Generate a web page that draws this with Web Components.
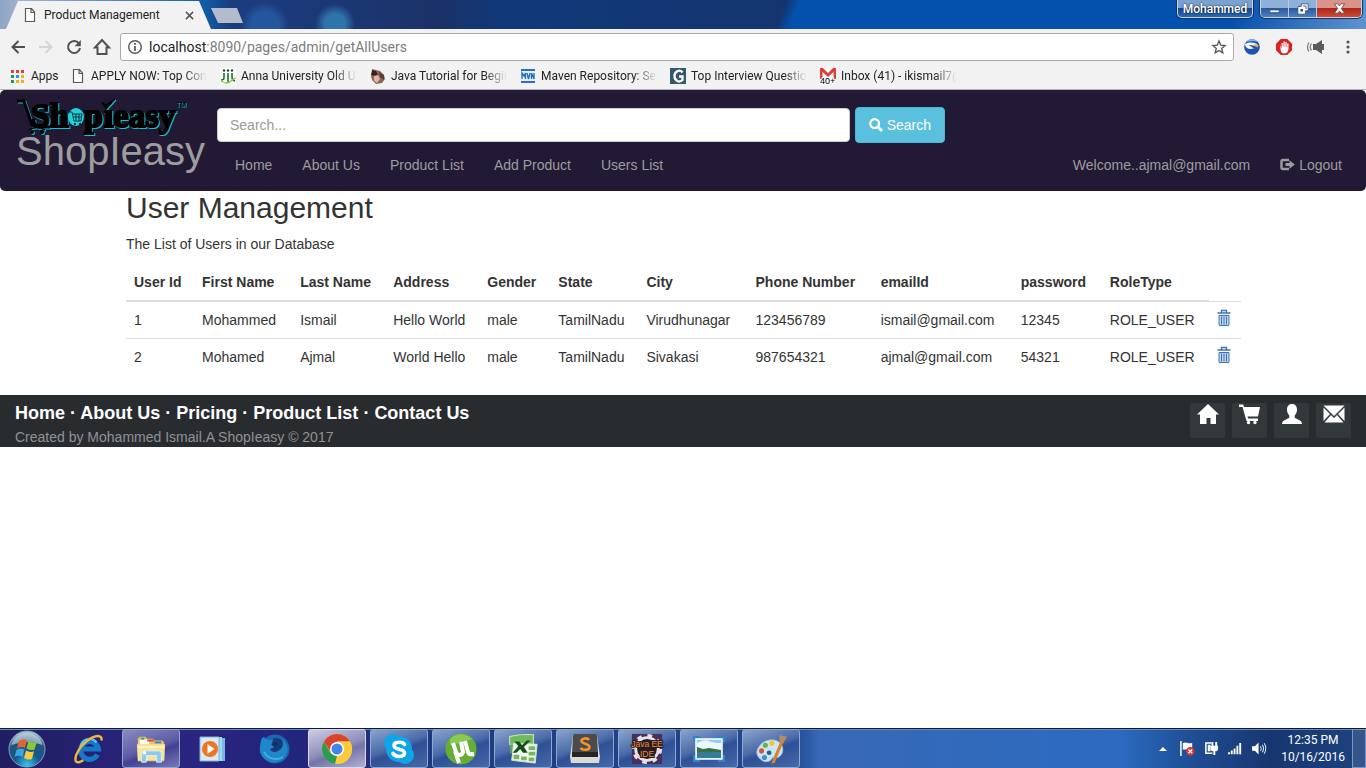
<!DOCTYPE html>
<html lang="en">
<head>
<meta charset="utf-8">
<title>Product Management</title>
<style>
  html, body { margin: 0; height: 100%; }
  body { font: 14px/20px "Liberation Sans", Arial, sans-serif; color: #333; background: #fff; }
</style>
</head>
<body>
<desktop-screen>
  <browser-chrome slot="browser">
    <book-mark icon="page">APPLY NOW: Top Con</book-mark>
    <book-mark icon="anna">Anna University Old U</book-mark>
    <book-mark icon="squirrel">Java Tutorial for Begin</book-mark>
    <book-mark icon="mvn">Maven Repository: Sea</book-mark>
    <book-mark icon="gee">Top Interview Questio</book-mark>
    <book-mark icon="gmail">Inbox (41) - ikismail7@</book-mark>
  </browser-chrome>
  <shop-navbar user="ajmal@gmail.com"></shop-navbar>
  <user-list heading="User Management">The List of Users in our Database</user-list>
  <shop-footer>Created by Mohammed Ismail.A ShopIeasy © 2017</shop-footer>
  <task-bar slot="taskbar"></task-bar>
</desktop-screen>

<script>
const ICONS = {
  page: ['0 0 16 16', '<path d="M3.500 1.500h6l3 3.500v9.500h-9zM9 1.500v4h3.500" fill="#fff" stroke="#5a5a5a" stroke-width="1.200"/>'],
  close: ['0 0 10 10', '<path d="M1 1l8 8M9 1l-8 8" stroke="#555" stroke-width="1.700"/>'],
  back: ['0 0 16 16', '<path d="M15 8H2.500M8.500 2L2.500 8l6 6" fill="none" stroke="#505050" stroke-width="2"/>'],
  forward: ['0 0 16 16', '<path d="M1 8h12.500M7.500 2l6 6-6 6" fill="none" stroke="#d4d4d4" stroke-width="2"/>'],
  reload: ['0 0 16 16', '<path d="M13 4.500A6 6 0 1 0 14 9" fill="none" stroke="#505050" stroke-width="2"/><path d="M14.800 1v6.200H8.600z" fill="#505050"/>'],
  home: ['0 0 18 18', '<path d="M9 2L2 9.500h2.500V16h9V9.500H16z" fill="none" stroke="#505050" stroke-width="2"/>'],
  info: ['0 0 16 16', '<circle cx="8" cy="8" r="6.300" fill="none" stroke="#555" stroke-width="1.400"/><path d="M8 7v5M8 4v1.700" stroke="#555" stroke-width="1.700"/>'],
  star: ['0 0 16 16', '<path d="M8 2l1.700 4.100 4.400.4-3.400 2.900 1.100 4.400L8 11.500l-3.800 2.300 1.100-4.400L1.900 6.500l4.400-.4z" fill="none" stroke="#555" stroke-width="1.300"/>'],
  eagle: ['0 0 16 16', '<circle cx="8" cy="8" r="7.800" fill="#1d55b0"/><path d="M2 3a8 8 0 0 1 12 0L9 2z" fill="#7ab8ef"/><path d="M1 5c5-2 9-2 13 1l-1 1.500-4-1-2 1 3 2-4 .5C3 9.500 1 8 1 5z" fill="#f3f6fa"/><path d="M10 5l5 1.500-1.500 2-3-1.500z" fill="#e9a640"/><path d="M5 6l4 .5-2 1z" fill="#222"/>'],
  stop: ['0 0 16 16', '<path d="M4.800 0h6.400L16 4.800v6.400L11.200 16H4.800L0 11.200V4.800z" fill="#da2220"/><path d="M4.500 6v4c0 3 1.500 4.500 3.800 4.500S12 13 12.500 10V4.500h-1.300V8h-.6V3H9.300v4.500h-.6v-5H7.400v5h-.6V4H5.600v6z" fill="#fff"/>'],
  speaker: ['0 0 18 16', '<path d="M6 5h3l6-4v14l-6-4H6zM15 5h2v6h-2z" fill="#5c5c5c"/><path d="M4.500 4.500c-1.500 2-1.500 5 0 7M2 3.500c-2 2.500-2 6.500 0 9" fill="none" stroke="#777" stroke-width="1.200"/>'],
  dots: ['0 0 16 16', '<g fill="#555"><circle cx="8" cy="3" r="1.600"/><circle cx="8" cy="8" r="1.600"/><circle cx="8" cy="13" r="1.600"/></g>'],
  apps: ['0 0 13 13', '<path d="M0 0h3v3H0zM5 0h3v3H5zM10 0h3v3h-3z" fill="#dc4437"/><path d="M0 5h3v3H0zM0 10h3v3H0z" fill="#0f9d58"/><path d="M5 5h3v3H5z" fill="#4285f4"/><path d="M10 5h3v3h-3zM5 10h3v3H5zM10 10h3v3h-3z" fill="#f0b020"/>'],
  anna: ['0 0 16 16', '<path d="M0 0h16v16H0z" fill="#fff"/><g fill="none" stroke="#13752c" stroke-width="1.600"><path d="M4 5v5q0 2-3 2M8 5v9M12 5v4q0 3 3 4"/></g><g fill="#174c2a"><circle cx="4" cy="2.500" r="1.200"/><circle cx="8" cy="2.500" r="1.200"/><circle cx="12" cy="2.500" r="1.200"/></g><path d="M1 13q6 4 10 0t4-2" fill="none" stroke="#8cc63f" stroke-width="1.400"/>'],
  squirrel: ['0 0 16 16', '<path d="M2 1l4 1 4 1 4 4 1 4-3 4-6 1-4-4-1-4 1-3z" fill="#8a6654"/><path d="M2 2l4 1 2 4-3 1-4-1z" fill="#33231f"/><path d="M4 8l4-1 2 4-3 4-3-2z" fill="#d8b8a4"/><path d="M9 4l5 3 0 5-4-3z" fill="#5d3c30"/>'],
  mvn: ['0 0 16 16', '<path d="M1 1h14v2H1zM1 13h14v2H1z" fill="#1f6fcf"/><path d="M2 11V5l2 3 1.500-3v6M7 5l1.500 6L10 5M11.500 11V5l2.500 6V5" fill="none" stroke="#1f6fcf" stroke-width="1.400"/>'],
  gee: ['0 0 16 16', '<path d="M0 0h16v16H0z" fill="#34586c"/><path d="M12.500 4.500C10 1 4.500 3 4.500 8s5 7 8 4V8.500H9" fill="none" stroke="#fff" stroke-width="2.300"/>'],
  gmail: ['0 0 16 16', '<path d="M0 0h16v11H0z" fill="#dd4038"/><path d="M2.500 11V4L8 9l5.500-5v7zM3 0h10L8 5z" fill="#fff"/><text x="0" y="16" font-family="Liberation Sans, sans-serif" font-size="9" stroke="#fff" stroke-width="2" paint-order="stroke">40+</text>'],
  search: ['0 0 14 14', '<circle cx="5.600" cy="5.600" r="4.400" fill="none" stroke="currentColor" stroke-width="2.200"/><path d="M8.800 8.800l4.200 4.200" stroke="currentColor" stroke-width="2.800"/>'],
  logout: ['0 0 15 14', '<path d="M9 2H3Q1.500 2 1.500 3.500v6Q1.500 11 3 11h6" fill="none" stroke="currentColor" stroke-width="2.400"/><path d="M5.500 5h4V2.300l5.300 4.200-5.300 4.200V8h-4z" fill="currentColor"/>'],
  trash: ['0 0 14 18', '<path d="M.5 4h13M4.500 3.500V1.500h5v2" fill="none" stroke="#3d74b8" stroke-width="1.400"/><path d="M2 6.500h10V16q0 .5-.5.500h-9Q2 16.500 2 16z" fill="#c3d5ee" stroke="#3d74b8"/><path d="M4.500 7.500v8M7 7.500v8M9.500 7.500v8" stroke="#3d74b8"/>'],
  house: ['0 0 22 22', '<path d="M11 1L22 11.500h-3V21h-5.500v-6h-4v6H3v-9.500H0z" fill="#fff"/>'],
  cart: ['0 0 22 22', '<path d="M0 1.500h4.200L5 4h16l-2 9.500H8.500l.6 2H19V18H7.500L3.500 4H0z" fill="#fff"/><circle cx="9.500" cy="19.500" r="1.700" fill="#fff"/><circle cx="16" cy="19.500" r="1.700" fill="#fff"/>'],
  person: ['0 0 22 22', '<path d="M11 1c3.500 0 5 2.500 5 5.500 0 2.800-1 4.500-2.300 6v2.200c2 1.600 7.300 2.300 7.300 6.300H1c0-4 5.300-4.700 7.300-6.300v-2.200C7 11 6 9.300 6 6.500 6 3.500 7.500 1 11 1z" fill="#fff"/>'],
  mail: ['0 0 22 22', '<path d="M.5 2.500h21L11 13zM.5 4.500L7 11 .5 18zM21.500 4.500V18L15 11zM8 12l3 3 3-3 6.500 7.500h-19z" fill="#fff"/>'],
  orb: ['0 0 38 38', '<defs><radialGradient id="o" cx=".5" cy=".95" r=".9"><stop offset="0" stop-color="#35c5f0"/><stop offset=".4" stop-color="#155a8e"/><stop offset=".75" stop-color="#24527d"/><stop offset="1" stop-color="#a6bfd0"/></radialGradient></defs><circle cx="19" cy="19" r="18" fill="url(#o)" stroke="#7fa3bd"/><path d="M3.500 15a16 16 0 0 1 31 0q-15-6-31 0z" fill="#c6d8e3" opacity=".6"/><path d="M11 11q4-3 8-.5L17 18q-4-2-8 .5z" fill="#e8622c"/><path d="M20.500 11q4 2.500 8.500.5l-2.500 8q-4 1.500-8-1z" fill="#8cc63e"/><path d="M8.500 20q4-2.500 8-.5L14.500 27q-4-2.500-8 0z" fill="#3aa5e0"/><path d="M18 20.500q4 2.500 8 .8L24 29q-4 1.500-8-1z" fill="#fccb32"/>'],
  ie: ['0 0 34 32', '<path d="M26 22A9.500 9.500 0 1 1 27 16H10" fill="none" stroke="#1878c8" stroke-width="5.500"/><path d="M25 9A9.500 9.500 0 0 0 8 14" fill="none" stroke="#57c0f2" stroke-width="2.500"/><path d="M30 7C32 2 26 0 17 6 7 13 1 24 3 29c1 2 5 1 8-1" fill="none" stroke="#f2b63a" stroke-width="2.600"/>'],
  folder: ['0 0 34 32', '<path d="M3 5l2-2h6l2 2h6l2 2h8l2 2v20H3z" fill="#e9c766"/><path d="M5 6h10v5H5z" fill="#fff"/><path d="M6 4h4v2H6z" fill="#35a84d"/><path d="M13 6h7v2h-7z" fill="#d5493f"/><path d="M21 8h7v2h-7z" fill="#3585cf"/><path d="M2 11h30l-1 17H3z" fill="#f8e49b"/><path d="M3 13h28v2H3z" fill="#fff2bd"/><path d="M7 30v-9q0-3 3-3h15q3 0 3 3v9h-5v-7H12v7z" fill="#8ccbe8" stroke="#d8f0fa"/><circle cx="10" cy="20" r="2" fill="#fff"/>'],
  wmp: ['0 0 32 32', '<path d="M9 5h19v23H9z" fill="#77b9e2"/><path d="M7 4h18v24H7z" fill="#a7d4ee"/><path d="M3 4h19v24H3z" fill="#d7eaf6" stroke="#7fb4d9"/><circle cx="13" cy="16" r="8" fill="#ee7620"/><path d="M10.500 11l7 5-7 5z" fill="#fff"/>'],
  firefox: ['0 0 32 32', '<circle cx="16" cy="16" r="14.500" fill="#1a66b4"/><circle cx="17" cy="15" r="10" fill="#173b7a"/><path d="M2 8C2 6 4 4 5 4c1 2 3 2 5 3l4-1-1 4 4 2-3 3-3 1c1 3 5 4 8 2 6-3 6-8 3-13 5 3 8 9 6 15-3 9-14 12-21 7S0 16 2 8z" fill="#1e86c9"/><path d="M5 19c4 7 12 9 19 5" fill="none" stroke="#3db0e4" stroke-width="2"/><path d="M12 11l5-2 2 2-4 3z" fill="#102c60"/>'],
  chrome: ['0 0 32 32', '<circle cx="16" cy="16" r="15" fill="#ffcd41"/><path d="M3 8.500A15 15 0 0 1 29 8.500H16l-6 11z" fill="#d8432f"/><path d="M3 8.500L9.500 20 16 23l-2 8A15 15 0 0 1 3 8.500z" fill="#2b9c56"/><path d="M16 8.500h13A15 15 0 0 1 14.500 31L22.500 20z" fill="#fccb3c"/><circle cx="16" cy="16" r="7" fill="#fff"/><circle cx="16" cy="16" r="5.500" fill="#4285ea"/>'],
  skype: ['0 0 32 32', '<circle cx="10" cy="10" r="9" fill="#0fa5e6"/><circle cx="22" cy="22" r="9" fill="#0fa5e6"/><circle cx="16" cy="16" r="13" fill="#0fa5e6"/><path d="M21.500 11.500C20 8.500 11 8 11 12.500s10.500 3 10.500 7.500-9 4.500-11.500.5" fill="none" stroke="#fff" stroke-width="3.600" stroke-linecap="round"/>'],
  torrent: ['0 0 32 32', '<circle cx="16" cy="16" r="15.500" fill="#66ad34"/><path d="M5 6a15 15 0 0 1 22 0Q16 10 5 12z" fill="#8bca52"/><path d="M8 10l3 9c1 4 6 4 7 0l-2-10M20 8l3 11q1 3 6 2M10 18l4 12" fill="none" stroke="#fff" stroke-width="4"/>'],
  excel: ['0 0 34 32', '<path d="M3 3q12-3 25-2v10H3z" fill="#8fca7d" stroke="#d8efd0" stroke-width="1.500"/><path d="M3 3q12-3 25-2v10L3 21z" fill="#64b44f" opacity=".7"/><path d="M7 10l25 1-2 20-25-3z" fill="#f2f8ef" stroke="#d3e5cc"/><path d="M8 8h5l3 4 5-5h4l-7 7 4 6h-5l-3-4-4 4H6l6-7z" fill="#124f1c"/><path d="M23 13h7v4h-7zM23 19h7v4h-7zM15 24h6v4h-6zM23 25h6v4h-6zM7 22h6v5H7z" fill="#77b85f"/>'],
  sublime: ['0 0 32 32', '<path d="M4 2h24l3 22-1 6H2l-1-6z" fill="#dcdad6"/><path d="M4 3q0-2 2-2h20q2 0 2 2l1 17q0 2-2 2H5q-2 0-2-2z" fill="#4b4b4b"/><path d="M3 19h26v5H3z" fill="#262626"/><path d="M20 7C18.500 4.500 12.500 5 12.500 8s8 2.500 8 6-7 3.500-9 1" fill="none" stroke="#f49427" stroke-width="2.600"/>'],
  javaee: ['0 0 34 32', '<path d="M1 0h32v32H1z" fill="#47305c"/><circle cx="17" cy="16" r="12" fill="#241c2c" stroke="#e3e3e3" stroke-width="3"/><circle cx="17" cy="16" r="14.500" fill="none" stroke="#e3e3e3" stroke-width="3" stroke-dasharray="5 6.400"/><g font-family="Liberation Sans, sans-serif" font-size="9" fill="#f78b1f" text-anchor="middle" stroke="#241c2c" stroke-width="2" paint-order="stroke"><text x="17" y="14">Java EE</text><text x="17" y="25">IDE</text></g>'],
  photos: ['0 0 32 28', '<path d="M1 7V2h6M25 2h6v5M31 20v6h-6M7 26H1v-6" fill="none" stroke="#2d86cd" stroke-width="2"/><path d="M3 4h26v20H3z" fill="#8ccdf1" stroke="#fff" stroke-width="1.500"/><path d="M4 8q8-4 12-2t12 2v7H4z" fill="#edf8fd"/><path d="M4 12l6 2 6-1 12 2v3H4z" fill="#347341"/><path d="M4 17h24v6H4z" fill="#367b9c"/>'],
  paint: ['0 0 34 32', '<path d="M4 14C9 5 22 4 27 10c4 5 3 11-1 14-3 3-5-1-8 2-2 4-8 5-12 1-5-4-5-9-2-13z" fill="#cce5f4" stroke="#93bedb"/><circle cx="15" cy="20" r="2.500" fill="#2a5c97"/><circle cx="7" cy="18" r="2.700" fill="#e24b3a"/><circle cx="11" cy="12" r="2.700" fill="#65b344"/><circle cx="18" cy="10" r="2.700" fill="#f1c530"/><circle cx="10" cy="25" r="2.700" fill="#3d8edb"/><path d="M27 8l3 1-9 22-4 .500z" fill="#d9822b"/><path d="M26 1l8 2-4 7-4-2z" fill="#b98b61"/>'],
  up: ['0 0 8 4', '<path d="M0 4l4-4 4 4z" fill="#fff"/>'],
  flag: ['0 0 16 16', '<path d="M1 0v16" stroke="#fff" stroke-width="1.600"/><path d="M3 2q3-1 5 0t5 0v7H3z" fill="#fff"/><circle cx="11" cy="11" r="4.500" fill="#d9352c"/><path d="M9 9l4 4M13 9l-4 4" stroke="#fff" stroke-width="1.400"/>'],
  plug: ['0 0 16 16', '<path d="M8 2H2v11h7" fill="none" stroke="#fff" stroke-width="1.600"/><path d="M4 4h3v7H4z" fill="#fff"/><path d="M7 5h8v3q0 3-3 3v4h-2v-4Q7 11 7 8zM8 1h2v4H8zM12 1h2v4h-2z" fill="#fff"/>'],
  signal: ['0 0 16 12', '<path d="M0 10h2v2H0zM3 8h2v4H3zM6 6h2v6H6zM9 3h2v9H9zM12 0h2v12h-2z" fill="#fff"/>'],
  volume: ['0 0 16 14', '<path d="M0 4.500h3L7 .5v13l-4-4H0z" fill="#fff"/><path d="M9 4.500q1.500 2.500 0 5M11 3q2.500 4 0 8M13 1.500q3.500 5.500 0 11" fill="none" stroke="#dbe6f5" stroke-width="1.100"/>'],
  minimize: ['0 0 14 14', '<path d="M2 8.500h10v3H2z" fill="#fff" stroke="#36507f"/>'],
  restore: ['0 0 14 14', '<path d="M5 1h8v8h-3v4H1V4h4z" fill="#fff" stroke="#36507f"/><path d="M4 7h3v3H4z" fill="#36507f"/><path d="M7 3.500h3.500V7" fill="none" stroke="#36507f"/>'],
  shut: ['0 0 14 14', '<path d="M1.500 2h3.700L7 4.300 8.800 2h3.700L9 7l3.500 5H8.800L7 9.700 5.200 12H1.500L5 7z" fill="#fff" stroke="#5a3438" stroke-width=".8"/>']
};

class Base extends HTMLElement {
  constructor() {
    super();
    this.attachShadow({ mode: 'open' });
  }
  connectedCallback() { this.shadowRoot.innerHTML = this.view(); }
}

/* A drawing from the ICONS map, sized by its w and h attributes. */
customElements.define('ui-icon', class extends Base {
  view() {
    const [box, art] = ICONS[this.getAttribute('name')];
    const w = this.getAttribute('w') || 16, h = this.getAttribute('h') || w;
    return `<style>:host{display:inline-block;flex:none;line-height:0}svg{display:block;overflow:visible}</style>
      <svg width="${w}" height="${h}" viewBox="${box}" aria-hidden="true">${art}</svg>`;
  }
});

customElements.define('desktop-screen', class extends Base {
  view() {
    return `<style>
      :host{display:flex;flex-direction:column;min-height:100vh}
      main{flex:1;background:#fff}
    </style>
    <slot name="browser"></slot><main><slot></slot></main><slot name="taskbar"></slot>`;
  }
});

customElements.define('book-mark', class extends Base {
  view() {
    return `<style>
      :host{display:block;flex:none;width:137px}
      a{display:flex;align-items:center;gap:5px;color:#222;text-decoration:none}
      span{flex:1;overflow:hidden;white-space:nowrap;mask-image:linear-gradient(90deg,#000 80%,transparent)}
    </style>
    <a href="#"><ui-icon name="${this.getAttribute('icon')}"></ui-icon><span><slot></slot></span></a>`;
  }
});

customElements.define('browser-chrome', class extends Base {
  view() {
    return `<style>
      :host{display:block;font:12px/16px Roboto,"Noto Sans",sans-serif;color:#222;background:#f2f2f2;border-bottom:1px solid #b4b1b8}
      button{border:0;padding:0;background:none;display:flex;align-items:center;justify-content:center;font:inherit}
      header{display:flex;height:29px;padding:0 4px 0 6px;align-items:flex-start;
        background:linear-gradient(112deg,transparent 730px,#0450ad 742px,#0450ad 1150px,#5c90ce 1270px),
        radial-gradient(circle at 265px 26px,#25559c 0 14px,transparent 24px),
        radial-gradient(circle at 335px 24px,#2f73ab 0 10px,transparent 20px),
        linear-gradient(90deg,#8fa3c4 0,#a3b3cf 20px,#0f62ac 200px,#1b3d80 230px,#1b3268 440px,#103878 500px,#14356f 800px)}
      .tab{display:flex;align-items:center;box-sizing:border-box;width:205px;height:28px;margin-top:1px;padding:0 17px 0 16px;gap:6px;background:#f2f2f2;clip-path:polygon(12px 0,193px 0,205px 28px,0 28px)}
      .tab span{flex:1}
      .new{width:32px;height:15px;margin-top:8px;background:#b4bbcb;clip-path:polygon(0 0,26px 0,32px 15px,7px 15px)}
      .user{margin-left:auto;width:76px;height:18px;color:#fff;font-weight:500;text-shadow:0 0 2px #000;
        background:linear-gradient(#7ba1d0 0 45%,#164a8f 50%,#2c67ae)}
      .user,.win{border:1px solid #c4d6ec;border-top:0;border-radius:0 0 5px 5px;box-shadow:0 0 0 1px #16345f}
      .win{display:flex;margin-left:7px;height:17px;overflow:hidden}
      .win button{width:28px;background:linear-gradient(#8eb0d9 0 45%,#2a5b9d 50%,#4e80bd);border-right:1px solid #b6cbe6}
      .win button:last-child{width:44px;border:0;background:linear-gradient(#d8938a 0 45%,#b02618 50%,#cc4b36)}
      .tools{display:flex;align-items:center;padding:4px 2px 2px 4px}
      .tools>button{width:28px;height:27px}
      .tools>.ext{width:32px}
      form{flex:1;display:flex;align-items:center;box-sizing:border-box;height:28px;margin:0 2px 0 4px;padding:0 6px;border:1px solid #aaa;border-radius:3px;background:#fff;font:14px/20px Roboto,"Noto Sans",sans-serif}
      form ui-icon{margin-right:6px}
      input{flex:1;min-width:0;border:0;padding:0;outline:0;background:none;font:inherit;color:#7c7c7c}
      nav{display:flex;align-items:center;gap:13px;height:26px;padding-left:11px}
      .apps{display:flex;box-sizing:border-box;width:46px;align-items:center;gap:7px;color:#222;text-decoration:none}
    </style>
    <header>
      <div class="tab"><ui-icon name="page"></ui-icon><span>Product Management</span><button aria-label="Close tab"><ui-icon name="close" w="9"></ui-icon></button></div>
      <button class="new" aria-label="New tab"></button>
      <button class="user">Mohammed</button>
      <div class="win"><button aria-label="Minimize"><ui-icon name="minimize" w="13"></ui-icon></button><button aria-label="Restore"><ui-icon name="restore" w="12"></ui-icon></button><button aria-label="Close"><ui-icon name="shut" w="13"></ui-icon></button></div>
    </header>
    <div class="tools">
      <button aria-label="Back"><ui-icon name="back"></ui-icon></button>
      <button aria-label="Forward"><ui-icon name="forward"></ui-icon></button>
      <button aria-label="Reload"><ui-icon name="reload"></ui-icon></button>
      <button aria-label="Home"><ui-icon name="home" w="18"></ui-icon></button>
      <form><ui-icon name="info"></ui-icon><label for="url">localhost</label><input id="url" value=":8090/pages/admin/getAllUsers"><button type="button" aria-label="Bookmark"><ui-icon name="star" style="margin:0"></ui-icon></button></form>
      <button class="ext" aria-label="Eagle extension"><ui-icon name="eagle"></ui-icon></button>
      <button class="ext" aria-label="Blocker extension"><ui-icon name="stop"></ui-icon></button>
      <button class="ext" aria-label="Sound extension"><ui-icon name="speaker" w="18" h="16"></ui-icon></button>
      <button class="ext" aria-label="Menu"><ui-icon name="dots"></ui-icon></button>
    </div>
    <nav><a class="apps" href="#"><ui-icon name="apps" w="13"></ui-icon>Apps</a><slot></slot></nav>`;
  }
});

customElements.define('shop-logo', class extends Base {
  view() {
    return `<style>:host{display:block}svg{display:block;overflow:visible}</style>
    <svg width="172" height="38" viewBox="0 0 172 38" role="img" aria-label="Shopieasy">
      <defs><g id="art">
        <path d="M1 3h7l8 24 6 2h12" fill="none" stroke-width="3" stroke="currentColor"/>
        <path d="M13 32q8-5 16 0" fill="none" stroke-width="1.500" stroke="currentColor"/>
        <circle cx="16" cy="34" r="2"/><circle cx="26" cy="34" r="2"/>
        <path d="M86 4l4 7 9-10-9 6z" stroke-width="1.500" stroke="currentColor"/>
        <g font-family="Liberation Serif, serif" font-weight="700" font-size="34" stroke="currentColor" stroke-width="2"><text x="15" y="29">Sh</text><text x="68" y="29">p</text><text x="88" y="29">ıeasy</text></g>
        <text x="160" y="9" font-family="Liberation Sans, sans-serif" font-size="7">TM</text>
      </g></defs>
      <use href="#art" x="1" y="1" fill="#19c3cd" color="#19c3cd"/>
      <use href="#art" fill="#000" color="#000"/>
      <ellipse cx="60" cy="19" rx="8" ry="9" fill="#1fd3dd"/>
      <path d="M53 14h3l2 9h7l1-7H56M57 19h9M60 16v7M63 16v7" fill="none" stroke="#0b3640"/>
      <circle cx="59" cy="26" r="1"/><circle cx="64" cy="26" r="1"/>
    </svg>`;
  }
});

customElements.define('shop-navbar', class extends Base {
  view() {
    const links = ['Home', 'About Us', 'Product List', 'Add Product', 'Users List'];
    return `<style>
      :host{display:flex;background:#221935;border-radius:5px;color:#9d9d9d}
      a{color:inherit;text-decoration:none}
      .brand{flex:none;box-sizing:border-box;width:217px;padding:8px 0 0 16px}
      .brand span{display:block;margin-top:-5px;font-size:40px;line-height:40px}
      .main{flex:1;padding:17px 9px 4px 0}
      form{display:flex;align-items:center;gap:5px;width:64%;max-width:728px}
      input{flex:1;min-width:0;box-sizing:border-box;height:34px;padding:6px 12px;border:1px solid #ccc;border-radius:4px;font:14px/20px "Liberation Sans",sans-serif;color:#555}
      input::placeholder{color:#999;opacity:1}
      button{display:flex;align-items:center;gap:4px;height:36px;padding:0 13px;border:1px solid #46b8da;border-radius:4px;background:#5bc0de;color:#fff;font:14px/20px "Liberation Sans",sans-serif}
      nav{display:flex;margin-left:3px}
      nav a{display:flex;align-items:center;gap:4px;padding:12px 15px}
      .welcome{margin-left:auto}
    </style>
    <a class="brand" href="#"><shop-logo></shop-logo><span>ShopIeasy</span></a>
    <div class="main">
      <form><input type="search" aria-label="Search" placeholder="Search..."><button type="button"><ui-icon name="search" w="14"></ui-icon>Search</button></form>
      <nav>${links.map(t => `<a href="#">${t}</a>`).join('')}<a class="welcome" href="#">Welcome..${this.getAttribute('user')}</a><a href="#"><ui-icon name="logout" w="15" h="14"></ui-icon>Logout</a></nav>
    </div>`;
  }
});

customElements.define('user-list', class extends Base {
  view() {
    const heads = ['User Id', 'First Name', 'Last Name', 'Address', 'Gender', 'State', 'City', 'Phone Number', 'emailId', 'password', 'RoleType'];
    const widths = [68, 98, 93, 94, 71, 88, 109, 125, 140, 89, 107, 32];
    const rows = [
      ['1', 'Mohammed', 'Ismail', 'Hello World', 'male', 'TamilNadu', 'Virudhunagar', '123456789', 'ismail@gmail.com', '12345', 'ROLE_USER'],
      ['2', 'Mohamed', 'Ajmal', 'World Hello', 'male', 'TamilNadu', 'Sivakasi', '987654321', 'ajmal@gmail.com', '54321', 'ROLE_USER']
    ];
    return `<style>
      :host{display:block;padding:0 125px 0 126px}
      h2{margin:0 0 10px;font-size:30px;line-height:33px;font-weight:500}
      p{margin:0 0 10px}
      table{width:100%;margin-bottom:20px;border-collapse:collapse}
      th,td{padding:8px;text-align:left;white-space:nowrap}
      th{border-bottom:2px solid #ddd}
      td{border-top:1px solid #ddd}
      td:last-child{padding:7px 8px 0;vertical-align:top}
      a{display:block;width:16px}
    </style>
    <h2>${this.getAttribute('heading')}</h2>
    <p><slot></slot></p>
    <table>
      <colgroup>${widths.map(w => `<col width="${w}">`).join('')}</colgroup>
      <thead><tr>${heads.map(h => `<th scope="col">${h}</th>`).join('')}</tr></thead>
      <tbody>${rows.map(r => `<tr>${r.map(c => `<td>${c}</td>`).join('')}<td><a href="#" aria-label="Delete"><ui-icon name="trash" w="14" h="18"></ui-icon></a></td></tr>`).join('')}</tbody>
    </table>`;
  }
});

customElements.define('shop-footer', class extends Base {
  view() {
    const links = ['Home', 'About Us', 'Pricing', 'Product List', 'Contact Us'];
    return `<style>
      :host{display:flex;justify-content:space-between;padding:8px 15px 0;background:#292c2f;color:#8f9296}
      nav{font-size:18px;font-weight:700;line-height:20px;color:#fff;margin-bottom:4px}
      a{color:inherit;text-decoration:none}
      p{margin:0}
      .social{display:flex;gap:7px}
      .social a{display:flex;justify-content:center;width:35px;height:35px;border-radius:2px;background:#33383b}
    </style>
    <div><nav>${links.map(t => `<a href="#">${t}</a>`).join(' · ')}</nav><p><slot></slot></p></div>
    <div class="social">${['house', 'cart', 'person', 'mail'].map(n => `<a href="#" aria-label="${n}"><ui-icon name="${n}" w="22"></ui-icon></a>`).join('')}</div>`;
  }
});

customElements.define('task-bar', class extends Base {
  view() {
    const apps = [['ie', ''], ['folder', 'open lit'], ['wmp', ''], ['firefox', ''], ['chrome', 'open active'], ['skype', 'open'], ['torrent', 'open'], ['excel', 'open'], ['sublime', 'open'], ['javaee', 'open'], ['photos', 'open'], ['paint', 'open']];
    return `<style>
      :host{display:flex;box-sizing:border-box;height:40px;border-top:1px solid #0c1a38;color:#fff;font:12px/17px Roboto,"Noto Sans",sans-serif;
        background:linear-gradient(90deg,#201e60 0,#2a2480 12%,#23257c 22%,#1f3a80 32%,#21488f 58%,#3868b6 60%,#2b6bc0 82%,#1f4f96 87%,#17366f 93%,#1c4380 100%);
        box-shadow:inset 0 1px #6a8cc0}
      button{border:0;padding:0;background:none;color:inherit;font:inherit;display:flex;align-items:center;justify-content:center}
      .orb{width:54px}
      .apps{display:flex;gap:4px;margin-left:6px}
      .apps button{width:58px;box-sizing:border-box;border:1px solid transparent;border-radius:3px}
      .apps .open{border-color:#8fa8d0;background:linear-gradient(160deg,#8aa4cc 0,#4a6ba8 45%,#2e5096 55%,#4669a8)}
      .apps .lit{background:linear-gradient(160deg,#8b8bc2 0,#5d5aa5 50%,#433f92 60%,#7b79b8)}
      .apps .active{border-color:#dcdcf0;background:linear-gradient(160deg,#cccde2 0,#8e8dba 50%,#7473ab 60%,#b2b1d3)}
      .tray{margin-left:auto;display:flex;align-items:center}
      .tray button{width:24px;height:30px}
      time{margin:0 7px 0 10px;text-align:center}
      .tray .show{width:14px;height:100%;border:1px solid #7b97c2;box-sizing:border-box;background:#35558b}
    </style>
    <button class="orb" aria-label="Start"><ui-icon name="orb" w="38"></ui-icon></button>
    <div class="apps">${apps.map(([n, c]) => `<button class="${c}" aria-label="${n}"><ui-icon name="${n}" w="32"></ui-icon></button>`).join('')}</div>
    <div class="tray">
      <button aria-label="Hidden icons"><ui-icon name="up" w="8" h="4"></ui-icon></button>
      ${['flag', 'plug', 'signal', 'volume'].map(n => `<button aria-label="${n}"><ui-icon name="${n}" w="15"></ui-icon></button>`).join('')}
      <time>12:35 PM<br>10/16/2016</time>
      <button class="show" aria-label="Show desktop"></button>
    </div>`;
  }
});
</script>
</body>
</html>
